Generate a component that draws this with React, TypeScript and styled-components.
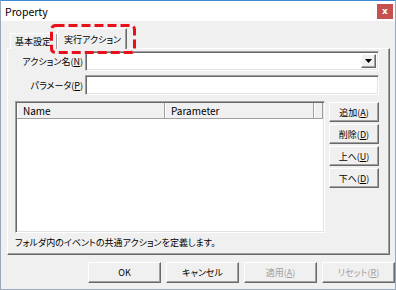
import React from "react"
import styled, { createGlobalStyle } from "styled-components"

const GlobalStyle = createGlobalStyle`
  html, body {
    margin: 0;
    padding: 0;
    background: #f0f0f0;
  }
  * {
    box-sizing: border-box;
  }
`

const uiFont = `"Noto Sans CJK JP", "Noto Sans", sans-serif`

const Window = styled.div`
  width: 396px;
  height: 290px;
  display: flex;
  flex-direction: column;
  background: #f0f0f0;
  border: 1px solid #9aa9ba;
  border-top-color: #3c8ad6;
  font-family: ${uiFont};
  font-feature-settings: "palt";
  font-size: 9px;
  color: #000;
`

const TitleBar = styled.div`
  height: 20px;
  flex: none;
  display: flex;
  align-items: center;
  justify-content: space-between;
  padding: 0 2px 0 4px;
  background: #fff;
  font-size: 10.5px;
`

const CloseButton = styled.div`
  width: 16px;
  height: 15px;
  display: flex;
  align-items: center;
  justify-content: center;
  background: #c75050;
  color: #fff;
  font-family: "DejaVu Sans", sans-serif;
  font-size: 9px;
  font-weight: bold;
  line-height: 1;
`

const Body = styled.div`
  flex: 1;
  display: flex;
  flex-direction: column;
  padding: 7px 0 0 6px;
`

const TabStrip = styled.div`
  position: relative;
  height: 21px;
  display: flex;
  align-items: flex-end;
  padding-left: 3px;
  margin-bottom: -1px;
  z-index: 1;
`

const Tab = styled.div<{ $active?: boolean }>`
  height: ${p => (p.$active ? 21 : 16)}px;
  width: ${p => (p.$active ? 70 : 48)}px;
  margin-left: ${p => (p.$active ? -1 : 0)}px;
  display: flex;
  align-items: center;
  padding-left: ${p => (p.$active ? 6 : 4)}px;
  white-space: nowrap;
  overflow: hidden;
  background: #f0f0f0;
  border: 1px solid;
  border-color: #fff #696969 transparent #fff;
  border-bottom: none;
  box-shadow: inset -1px 0 #a0a0a0;
  position: relative;
  z-index: ${p => (p.$active ? 2 : 1)};
`

const Callout = styled.svg`
  position: absolute;
  left: 43px;
  top: -4px;
  z-index: 3;
  pointer-events: none;
`

const Panel = styled.div`
  width: 383px;
  height: 207px;
  display: flex;
  flex-direction: column;
  border: 1px solid;
  border-color: #fff #696969 #696969 #fff;
  box-shadow: inset -1px -1px #a0a0a0;
  padding: 2px 10px 0 0;
`

const FieldRow = styled.div`
  display: flex;
  align-items: center;
  height: 20px;
  margin-bottom: 4px;
`

const Label = styled.div`
  width: 75px;
  margin-right: 2px;
  text-align: right;
  white-space: nowrap;
`

const Field = styled.div`
  flex: 1;
  height: 100%;
  display: flex;
  justify-content: flex-end;
  align-items: stretch;
  padding: 1px;
  background: #fff;
  border: 1px solid;
  border-color: #a0a0a0 #fff #fff #a0a0a0;
  box-shadow: inset 1px 1px #696969, inset -1px -1px #e3e3e3;
`

const DropButton = styled.div`
  width: 15px;
  display: flex;
  align-items: center;
  justify-content: center;
  margin: 1px 1px 1px 0;
  background: #f0f0f0;
  border: 1px solid;
  border-color: #fff #696969 #696969 #fff;
  box-shadow: inset -1px -1px #a0a0a0;
`

const ListRow = styled.div`
  display: flex;
  gap: 4px;
  padding-left: 7px;
  margin-top: 2px;
`

const ListView = styled.div`
  width: 310px;
  height: 132px;
  background: #fff;
  border: 1px solid;
  border-color: #a0a0a0 #fff #fff #a0a0a0;
  box-shadow: inset 1px 1px #696969, inset -1px -1px #e3e3e3;
  padding: 1px;
`

const Header = styled.div`
  display: flex;
  height: 16px;
  background: #f0f0f0;
  border-bottom: 1px solid #a0a0a0;
  font-size: 10px;
`

const HeaderCell = styled.div<{ $width?: number }>`
  width: ${p => (p.$width ? `${p.$width}px` : "auto")};
  flex: ${p => (p.$width ? "none" : 1)};
  display: flex;
  align-items: center;
  padding-left: 6px;
  border-right: 1px solid #a0a0a0;
  box-shadow: inset 1px 0 #fff;
`

const SideButtons = styled.div`
  display: flex;
  flex-direction: column;
  gap: 2px;
  padding-top: 1px;
`

const Button = styled.div<{ $width?: number; $height?: number; $disabled?: boolean }>`
  width: ${p => p.$width ?? 50}px;
  height: ${p => p.$height ?? 20}px;
  display: flex;
  align-items: center;
  justify-content: center;
  background: #f0f0f0;
  color: ${p => (p.$disabled ? "#a0a0a0" : "#000")};
  border: 1px solid;
  border-color: #fff #696969 #696969 #fff;
  box-shadow: inset -1px -1px #a0a0a0;
  white-space: nowrap;
`

const Status = styled.div`
  margin-top: 4px;
  padding-left: 7px;
  height: 12px;
  line-height: 12px;
  white-space: nowrap;
`

const Footer = styled.div`
  display: flex;
  gap: 5px;
  padding-left: 81px;
  margin-top: 7px;
`

const sideActions = [
  { text: "追加", key: "A" },
  { text: "削除", key: "D" },
  { text: "上へ", key: "U" },
  { text: "下へ", key: "D" },
]

const footerActions = [
  { text: "OK" },
  { text: "キャンセル" },
  { text: "適用", key: "A", disabled: true },
  { text: "リセット", key: "R", disabled: true },
]

function Mnemonic({ text, k }: { text: string; k?: string }) {
  if (!k) return <>{text}</>
  return (
    <>
      {text}(<u>{k}</u>)
    </>
  )
}

export default function App() {
  return (
    <>
      <GlobalStyle />
      <Window>
        <TitleBar>
          <span>Property</span>
          <CloseButton>x</CloseButton>
        </TitleBar>
        <Body>
          <TabStrip>
            <Tab>基本設定</Tab>
            <Tab $active>実行アクション</Tab>
            <Callout width="86" height="30" viewBox="0 0 86 30">
              <rect
                x="1.5"
                y="1.5"
                width="83"
                height="27"
                rx="4"
                fill="none"
                stroke="#e8101a"
                strokeWidth="3"
                strokeDasharray="9 4"
              />
            </Callout>
          </TabStrip>
          <Panel>
            <FieldRow>
              <Label>
                <Mnemonic text="アクション名" k="N" />
              </Label>
              <Field>
                <DropButton>
                  <svg width="7" height="5" viewBox="0 0 7 5">
                    <path d="M0 0h7L3.5 4z" fill="#000" />
                  </svg>
                </DropButton>
              </Field>
            </FieldRow>
            <FieldRow>
              <Label>
                <Mnemonic text="パラメータ" k="P" />
              </Label>
              <Field />
            </FieldRow>
            <ListRow>
              <ListView>
                <Header>
                  <HeaderCell $width={148}>Name</HeaderCell>
                  <HeaderCell $width={149}>Parameter</HeaderCell>
                  <HeaderCell />
                </Header>
              </ListView>
              <SideButtons>
                {sideActions.map(a => (
                  <Button key={a.text}>
                    <Mnemonic text={a.text} k={a.key} />
                  </Button>
                ))}
              </SideButtons>
            </ListRow>
            <Status>フォルダ内のイベントの共通アクションを定義します。</Status>
          </Panel>
          <Footer>
            {footerActions.map(a => (
              <Button key={a.text} $width={73} $height={21} $disabled={a.disabled}>
                <Mnemonic text={a.text} k={a.key} />
              </Button>
            ))}
          </Footer>
        </Body>
      </Window>
    </>
  )
}
